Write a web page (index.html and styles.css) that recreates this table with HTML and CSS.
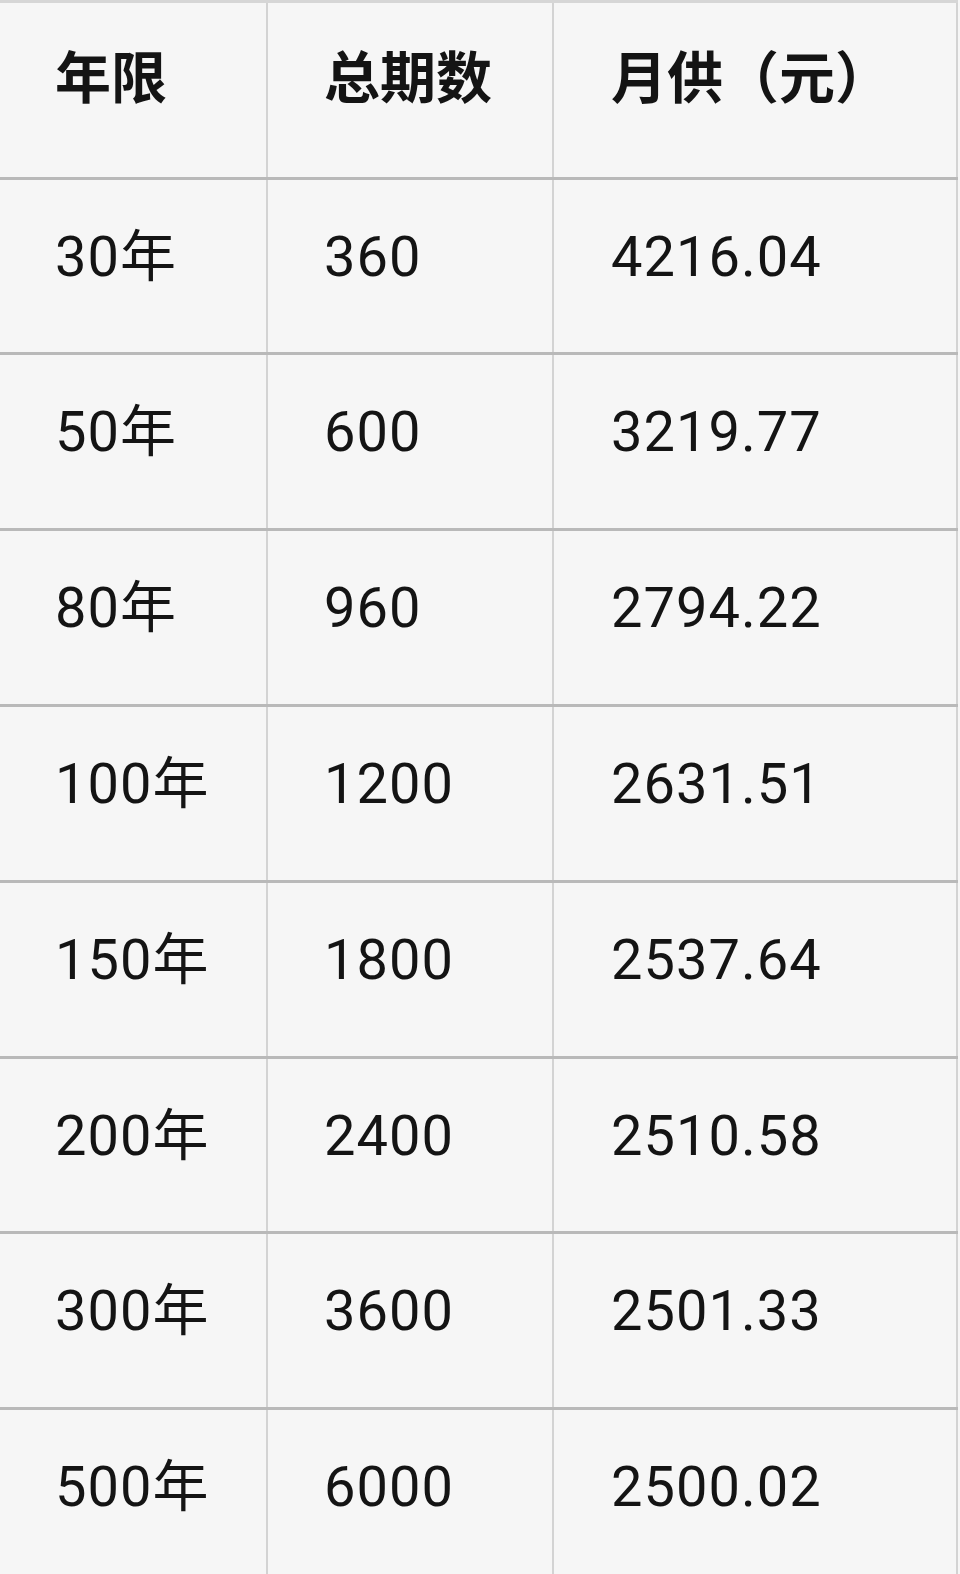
FILE: index.html
```html
<!DOCTYPE html>
<html lang="zh-CN">
<head>
<meta charset="utf-8">
<title>月供表</title>
<link rel="stylesheet" href="styles.css">
</head>
<body>
<div class="table">
  <div class="row head">
    <div class="cell c1">年限</div>
    <div class="cell c2">总期数</div>
    <div class="cell c3">月供（元）</div>
  </div>
  <div class="row short">
    <div class="cell c1">30年</div>
    <div class="cell c2">360</div>
    <div class="cell c3">4216.04</div>
  </div>
  <div class="row">
    <div class="cell c1">50年</div>
    <div class="cell c2">600</div>
    <div class="cell c3">3219.77</div>
  </div>
  <div class="row">
    <div class="cell c1">80年</div>
    <div class="cell c2">960</div>
    <div class="cell c3">2794.22</div>
  </div>
  <div class="row">
    <div class="cell c1">100年</div>
    <div class="cell c2">1200</div>
    <div class="cell c3">2631.51</div>
  </div>
  <div class="row">
    <div class="cell c1">150年</div>
    <div class="cell c2">1800</div>
    <div class="cell c3">2537.64</div>
  </div>
  <div class="row short">
    <div class="cell c1">200年</div>
    <div class="cell c2">2400</div>
    <div class="cell c3">2510.58</div>
  </div>
  <div class="row">
    <div class="cell c1">300年</div>
    <div class="cell c2">3600</div>
    <div class="cell c3">2501.33</div>
  </div>
  <div class="row">
    <div class="cell c1">500年</div>
    <div class="cell c2">6000</div>
    <div class="cell c3">2500.02</div>
  </div>
</div>
</body>
</html>
```

FILE: styles.css
```css
html {
  margin: 0;
  padding: 0;
  height: 1574px;
  overflow: hidden;
  background: #f6f6f6;
}
body {
  margin: 0;
  padding: 0;
  height: 1574px;
  overflow: hidden;
  background: #f6f6f6;
  font-family: Roboto, "Noto Sans CJK SC", sans-serif;
  color: #141414;
}
.table {
  width: 958px;
  border-top: 3px solid #d6d6d6;
  background: #f6f6f6;
}
.row {
  display: grid;
  grid-template-columns: 268px 286px 404px;
  height: 176px;
  box-sizing: border-box;
  border-bottom: 3px solid #b9b9b9;
}
.row.short {
  height: 175px;
}
.row.head {
  height: 177px;
}
.cell {
  box-sizing: border-box;
  border-right: 2px solid #d3d3d3;
  padding: 49px 0 0 55px;
  font-size: 56px;
  line-height: 56px;
  white-space: nowrap;
  letter-spacing: 1px;
}
.c2 { padding-left: 56px; }
.c3 { padding-left: 57px; }
.head .cell {
  padding-top: 48px;
  font-weight: 700;
  letter-spacing: 0;
}
```
